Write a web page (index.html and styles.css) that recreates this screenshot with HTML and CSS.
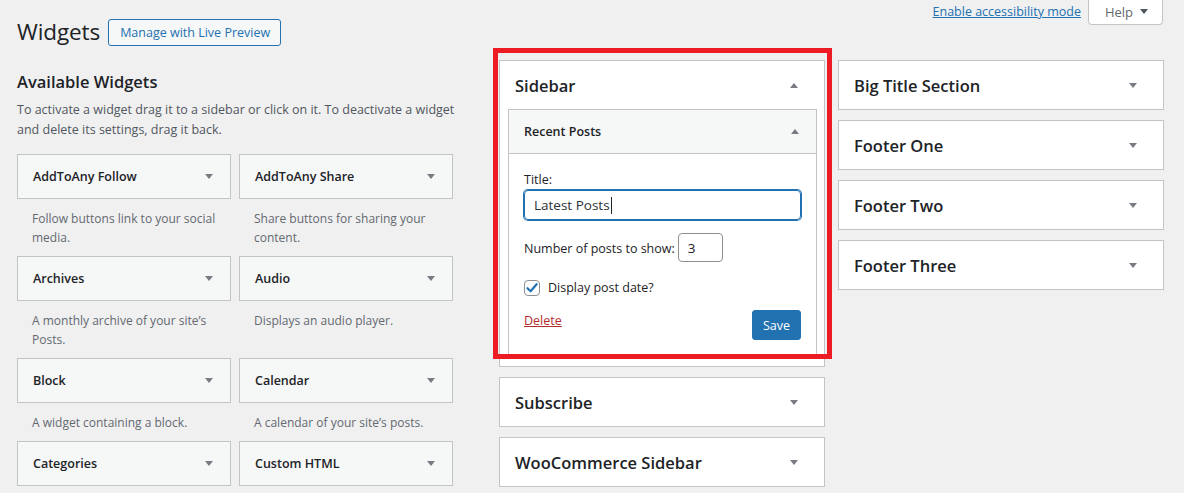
FILE: index.html
```html
<!DOCTYPE html>
<html>
<head>
<meta charset="utf-8">
<link rel="stylesheet" href="styles.css">
</head>
<body>
<div class="page">
  <header class="head">
    <div class="head-left">
      <h1 class="title">Widgets</h1>
      <a class="btn-outline">Manage with Live Preview</a>
    </div>
    <div class="head-right">
      <a class="a11y">Enable accessibility mode</a>
      <button class="help">Help <span class="tri-down"></span></button>
    </div>
  </header>

  <main class="cols">
    <section class="col-left">
      <h2 class="avail-title">Available Widgets</h2>
      <p class="avail-desc">To activate a widget drag it to a sidebar or click on it. To deactivate a widget<br>and delete its settings, drag it back.</p>
      <div class="widget-grid">
        <div class="witem">
          <div class="wbox"><span class="wname">AddToAny Follow</span><span class="tri-down"></span></div>
          <p class="wdesc">Follow buttons link to your social<br>media.</p>
        </div>
        <div class="witem">
          <div class="wbox"><span class="wname">AddToAny Share</span><span class="tri-down"></span></div>
          <p class="wdesc">Share buttons for sharing your<br>content.</p>
        </div>
        <div class="witem">
          <div class="wbox"><span class="wname">Archives</span><span class="tri-down"></span></div>
          <p class="wdesc">A monthly archive of your site’s<br>Posts.</p>
        </div>
        <div class="witem">
          <div class="wbox"><span class="wname">Audio</span><span class="tri-down"></span></div>
          <p class="wdesc">Displays an audio player.</p>
        </div>
        <div class="witem">
          <div class="wbox"><span class="wname">Block</span><span class="tri-down"></span></div>
          <p class="wdesc">A widget containing a block.</p>
        </div>
        <div class="witem">
          <div class="wbox"><span class="wname">Calendar</span><span class="tri-down"></span></div>
          <p class="wdesc">A calendar of your site’s posts.</p>
        </div>
        <div class="witem">
          <div class="wbox"><span class="wname">Categories</span><span class="tri-down"></span></div>
        </div>
        <div class="witem">
          <div class="wbox"><span class="wname">Custom HTML</span><span class="tri-down"></span></div>
        </div>
      </div>
    </section>

    <section class="col-side">
      <div class="sidebar open">
        <div class="sb-head"><h3 class="sb-name">Sidebar</h3><span class="tri-up"></span></div>
        <div class="iwidget">
          <div class="iw-head"><span class="iw-name">Recent Posts</span><span class="tri-up"></span></div>
          <div class="iw-body">
            <label class="lbl">Title:</label>
            <div class="txt-input">Latest Posts<span class="caret"></span></div>
            <div class="num-row">
              <span>Number of posts to show:</span>
              <span class="num-input">3</span>
            </div>
            <div class="chk-row">
              <span class="chk"><svg width="14" height="14" viewBox="0 0 14 14"><path d="M2.5 7.2 L5.6 10.2 L11.6 3.2" fill="none" stroke="#2271b1" stroke-width="2.2" stroke-linecap="round" stroke-linejoin="round"/></svg></span>
              <span>Display post date?</span>
            </div>
            <div class="act-row">
              <a class="del">Delete</a>
              <button class="save">Save</button>
            </div>
          </div>
        </div>
      </div>
      <div class="sidebar"><div class="sb-head"><h3 class="sb-name">Subscribe</h3><span class="tri-down"></span></div></div>
      <div class="sidebar"><div class="sb-head"><h3 class="sb-name">WooCommerce Sidebar</h3><span class="tri-down"></span></div></div>
    </section>

    <section class="col-side col-right">
      <div class="sidebar"><div class="sb-head"><h3 class="sb-name">Big Title Section</h3><span class="tri-down"></span></div></div>
      <div class="sidebar"><div class="sb-head"><h3 class="sb-name">Footer One</h3><span class="tri-down"></span></div></div>
      <div class="sidebar"><div class="sb-head"><h3 class="sb-name">Footer Two</h3><span class="tri-down"></span></div></div>
      <div class="sidebar"><div class="sb-head"><h3 class="sb-name">Footer Three</h3><span class="tri-down"></span></div></div>
    </section>
  </main>
  <div class="highlight"></div>
</div>
</body>
</html>
```

FILE: styles.css
```css
* { box-sizing: border-box; }
html, body { margin: 0; padding: 0; }
body {
  background: #f0f0f1;
  font-family: "Open Sans", "Noto Sans", sans-serif;
  font-size: 13px;
  color: #1d2327;
  width: 1184px;
  height: 493px;
  overflow: hidden;
}
.page { position: relative; padding-left: 17px; }

.head { display: flex; justify-content: space-between; align-items: flex-start; }
.head-left { display: flex; align-items: center; gap: 8px; padding-top: 17px; height: 46px; }
.title { margin: 0; font-size: 22.5px; font-weight: 400; line-height: 29px; color: #1d2327; letter-spacing: -0.1px; }
.btn-outline {
  display: inline-flex; align-items: center; height: 27px; padding: 0 10px 0 11px;
  border: 1px solid #2271b1; border-radius: 3px; background: #f6f7f7;
  color: #2271b1; font-size: 12.5px; font-weight: 500; margin-top: 1px;
}
.head-right { display: flex; align-items: flex-start; gap: 7px; padding-right: 21px; }
.a11y { color: #2271b1; text-decoration: underline; font-size: 12.5px; line-height: 23px; }
.help {
  display: inline-flex; align-items: center; gap: 7px; height: 26px; margin-top: -1px;
  width: 75px; justify-content: center;
  background: #fff; border: 1px solid #c3c4c7; border-top: none; border-radius: 0 0 4px 4px;
  font-family: inherit; font-size: 13px; color: #646970; padding: 0 0 0 2px;
}

.tri-down, .tri-up { width: 0; height: 0; border-left: 4px solid transparent; border-right: 4px solid transparent; flex: none; }
.tri-down { border-top: 5px solid #787c82; }
.tri-up { border-bottom: 5px solid #787c82; }
.help .tri-down { border-top-color: #50575e; }

.cols { display: flex; align-items: flex-start; margin-top: 14px; }
.col-left { width: 436px; }
.avail-title { margin: 10px 0 0; font-size: 16.5px; font-weight: 600; line-height: 24px; }
.avail-desc { margin: 6px 0 0; line-height: 20px; color: #50575e; font-size: 12.5px; white-space: nowrap; }
.widget-grid { display: grid; grid-template-columns: 214px 214px; column-gap: 8px; margin-top: 14px; }
.wbox {
  height: 45px; display: flex; align-items: center; justify-content: space-between;
  padding: 0 17px 0 15px; background: #f6f7f7; border: 1px solid #c3c4c7;
}
.wname { font-weight: 600; font-size: 12.5px; }
.wdesc { margin: 0; padding: 10px 10px 9px 15px; line-height: 19px; color: #646970; font-size: 12px; white-space: nowrap; }

.col-side { width: 326px; margin-left: 46px; display: flex; flex-direction: column; gap: 10px; }
.col-right { margin-left: 13px; }
.sidebar { background: #fff; border: 1px solid #c3c4c7; }
.sb-head { height: 48px; display: flex; align-items: center; justify-content: space-between; padding: 0 26px 0 15px; }
.sb-name { margin: 0; font-size: 16.5px; font-weight: 600; }
.sidebar.open { padding: 0 7px 10px 8px; }
.sidebar.open > .sb-head { padding: 0 19px 0 7px; height: 48px; }
.iwidget { border: 1px solid #c3c4c7; }
.iw-head { height: 44px; background: #f6f7f7; border-bottom: 1px solid #c3c4c7; display: flex; align-items: center; justify-content: space-between; padding: 0 17px 0 15px; }
.iw-name { font-weight: 600; font-size: 12.5px; }
.iw-body { padding: 17px 15px 15px; }
.lbl { display: block; line-height: 18px; font-size: 12.5px; }
.txt-input {
  margin-top: 1px; height: 30px; border: 1px solid #2271b1; box-shadow: 0 0 0 1px #2271b1; border-radius: 4px;
  display: flex; align-items: center; padding-left: 9px; font-size: 13.5px; color: #2c3338;
}
.caret { display: inline-block; width: 1px; height: 17px; background: #1d2327; margin-left: 1px; }
.num-row { display: flex; align-items: center; gap: 3px; margin-top: 15px; font-size: 12.5px; }
.num-input {
  width: 45px; height: 29px; border: 1px solid #8c8f94; border-radius: 4px;
  display: flex; align-items: center; padding-left: 9px; font-size: 13.5px; margin-top: -2px;
}
.chk-row { display: flex; align-items: center; gap: 8px; margin-top: 17px; font-size: 12.5px; }
.chk { width: 16px; height: 16px; border: 1px solid #8c8f94; border-radius: 4px; display: flex; align-items: center; justify-content: center; }
.act-row { display: flex; justify-content: space-between; align-items: flex-start; margin-top: 14px; }
.del { color: #b32d2e; text-decoration: underline; font-size: 12.5px; line-height: 18px; margin-top: 2px; }
.save {
  width: 49px; height: 30px; background: #2271b1; color: #fff; border: 1px solid #2271b1;
  border-radius: 3px; font-family: inherit; font-size: 12.5px; padding: 0;
}

.highlight {
  position: absolute; left: 493px; top: 48px; width: 339px; height: 311px;
  border: 5px solid #ed1c24; pointer-events: none;
}
```
